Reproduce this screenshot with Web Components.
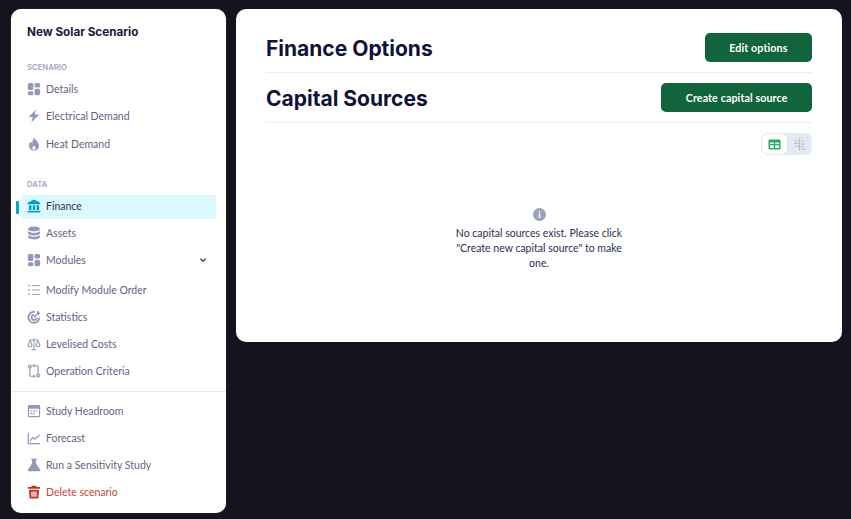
<!DOCTYPE html>
<html lang="en">
<head>
<meta charset="utf-8">
<title>Finance Options</title>
<style>
    html, body { margin: 0; height: 100%; background: #14141F; }
    body { font-family: "Lato", "Open Sans", sans-serif; overflow: hidden; }
</style>
</head>
<body>
<scenario-page>
    <scenario-sidebar slot="side"></scenario-sidebar>
    <finance-panel slot="main"></finance-panel>
</scenario-page>
<script>
const ICONS = {
    details: '<rect x="1" y="1" width="6.300" height="8" rx="1.800"/><rect x="8.700" y="1" width="6.300" height="5.300" rx="1.800"/><rect x="1" y="10.500" width="6.300" height="4.500" rx="1.800"/><rect x="8.700" y="7.700" width="6.300" height="7.300" rx="1.800"/>',
    bolt: '<path d="M10 .8 2 9.200h4.600L5 15.200l9-8.800H9L10 .8z"/>',
    flame: '<path d="M8.600 .8c.5 2.600 5.100 4.800 5.100 9.300A5.600 5.600 0 0 1 8 15.700a5.600 5.600 0 0 1-5.700-5.600c0-2.100 1-3.700 2.300-4.900.2 1.200.7 2 1.400 2.400C5.900 5.300 6.700 2.500 8.600.8zM8 9.800c-1.100 1.100-1.900 1.900-1.900 3a1.900 1.900 0 0 0 3.800 0c0-1.100-.8-1.900-1.900-3z" fill-rule="evenodd"/>',
    bank: '<path d="M8 .6.800 4.200V6h14.400V4.200L8 .6z"/><path d="M2.200 7h2.900v5.500H2.200zM6.600 7h2.800v5.500H6.600zM10.900 7h2.900v5.500h-2.900zM.8 13.300h14.400v2H.8z"/>',
    db: '<ellipse cx="8" cy="3.400" rx="6.800" ry="2.700"/><path d="M1.200 5.800c1 1.300 3.700 2.100 6.800 2.100s5.800-.8 6.800-2.100v2.500c0 1.400-3 2.600-6.800 2.600s-6.800-1.200-6.800-2.600z"/><path d="M1.200 10.300c1 1.300 3.700 2.100 6.800 2.100s5.800-.8 6.800-2.100v2.300c0 1.500-3 2.700-6.800 2.700s-6.800-1.200-6.800-2.700z"/>',
    list: '<g fill="none" stroke="currentColor" stroke-width="1.100"><path d="M5.500 3h9.500M5.500 8h9.500M5.500 13h9.500"/><path d="M1.300 3h2M1.300 8h2M1.300 13h2" stroke-width="1.700"/></g>',
    target: '<g fill="none" stroke="currentColor"><path d="M9 2.300A6.200 6.200 0 1 0 14 8.500" stroke-width="2.200"/><path d="M8.500 5.600A2.900 2.900 0 1 0 11 9" stroke-width="2"/><path d="M8 8.500 13.500 3" stroke-width="1.500"/></g><path d="M11.300 1.300 13.200.8l.2 2 2 .2-2.400 2.400-2-.2z"/>',
    scale: '<g fill="none" stroke="currentColor" stroke-width="1.200"><path d="M8 1.500v12.500M5.500 14.500h5M3 3.500h10"/><path d="M3.500 4 1.200 9.500a2.400 2.400 0 0 0 4.600 0zM12.500 4l-2.300 5.500a2.400 2.400 0 0 0 4.600 0z"/></g>',
    swap: '<g fill="none" stroke="currentColor" stroke-width="1.400"><circle cx="3.300" cy="2.800" r="1.600"/><circle cx="12.700" cy="13.200" r="1.600"/><path d="M3.300 4.500v8.500a1 1 0 0 0 1 1H9"/><path d="M12.700 11.500V3a1 1 0 0 0-1-1H7"/><path d="M8.600 .4 6.800 2l1.800 1.600M7.400 12.400 9.200 14l-1.800 1.600" stroke-width="1.200"/></g>',
    calendar: '<path fill-rule="evenodd" d="M2.500 1h11A1.500 1.500 0 0 1 15 2.500v11a1.500 1.500 0 0 1-1.500 1.500h-11A1.500 1.500 0 0 1 1 13.500v-11A1.500 1.500 0 0 1 2.500 1zM2.300 5.500v8c0 .2.100.3.3.3h10.800c.2 0 .3-.1.300-.3v-8z"/><path d="M4 7.500h2v1.300H4zM7 7.500h2v1.300H7zM10 7.500h2v1.300h-2zM4 10.300h2v1.300H4zM7 10.300h2v1.300H7z"/>',
    chart: '<g fill="none" stroke="currentColor" stroke-width="1.400"><path d="M1.500 2v12.500H15"/><path d="M3.500 11 6.500 7.500l2.500 2L14.500 4.500"/></g>',
    flask: '<path d="M4.800 .8h6.400v1.600h-1v4l4.800 7.100A1.100 1.100 0 0 1 14 15.200H2a1.100 1.100 0 0 1-1-1.700l4.800-7.100v-4h-1z"/>',
    trash: '<path fill-rule="evenodd" d="M5.500.8h5l.7 1.600H15v2H1v-2h3.800zM2.200 5.400h11.600l-.7 9.100a1.200 1.200 0 0 1-1.200 1H4.100a1.200 1.200 0 0 1-1.200-1zM5 7.500v6h1.400v-6zm2.300 0v6h1.400v-6zm2.300 0v6H11v-6z"/>'
}

const pageTemplate = document.createElement('template')
pageTemplate.innerHTML = `
    <style>
        :host {
            display: flex;
            align-items: flex-start;
            gap: 10px;
            padding: 9px 9px 0 11px;
        }
        ::slotted([slot="main"]) {
            flex: 1;
        }
    </style>
    <slot name="side"></slot>
    <slot name="main"></slot>
`

class ScenarioPage extends HTMLElement {
    constructor () {
        super()
        this.attachShadow({ mode: 'open' }).appendChild(pageTemplate.content.cloneNode(true))
    }
}

const navTemplate = document.createElement('template')
navTemplate.innerHTML = `
    <style>
        :host {
            display: flex;
            align-items: center;
            position: relative;
            height: 27px;
            margin: 0 10px;
            padding: 0 8px 0 6px;
            gap: 5px;
            font-size: 10.500px;
            color: #5F6480;
        }
        :host([active]) {
            height: 22px;
            padding-bottom: 2px;
            margin-top: 1px;
            background: #DAF8FE;
            border-radius: 3px;
            color: #2C3350;
        }
        :host([active])::before {
            content: '';
            position: absolute;
            left: -5px;
            top: 6px;
            width: 3px;
            height: 13px;
            border-radius: 1px;
            background: #00A9C6;
        }
        :host([danger]) { color: #C4473B; }
        svg {
            width: 14px;
            height: 14px;
            flex: none;
            fill: currentColor;
            color: #9298B5;
        }
        :host([active]) svg { color: #00A0BE; }
        :host([danger]) svg { color: #B8352A; }
        .label { flex: 1; white-space: nowrap; }
        .chevron { width: 8px; height: 8px; color: #3A3F57; display: none; }
        :host([expandable]) .chevron { display: block; margin-right: 1px; }
    </style>
    <svg class="icon" viewBox="0 0 16 16"></svg>
    <span class="label"><slot></slot></span>
    <svg class="chevron" viewBox="0 0 8 8"><path d="M1.300 2.600 4 5.300l2.700-2.700" fill="none" stroke="currentColor" stroke-width="1.300"/></svg>
`

class NavItem extends HTMLElement {
    constructor () {
        super()
        this.attachShadow({ mode: 'open' }).appendChild(navTemplate.content.cloneNode(true))
    }

    connectedCallback () {
        this.shadowRoot.querySelector('.icon').innerHTML = ICONS[this.getAttribute('icon')] || ''
    }
}

const sidebarTemplate = document.createElement('template')
sidebarTemplate.innerHTML = `
    <style>
        :host {
            display: block;
            width: 215px;
            height: 504px;
            box-sizing: border-box;
            padding-top: 16px;
            background: #fff;
            border-radius: 10px;
            box-shadow: 0 0 1px #8D93AD;
        }
        .title {
            margin: 0 0 0 16px;
            height: 15px;
            line-height: 15px;
            font-family: "Inter", sans-serif;
            font-size: 11.700px;
            font-weight: 700;
            color: #16193A;
        }
        .section {
            margin: 23px 0 0 16px;
            height: 11px;
            line-height: 11px;
            font-family: "Inter", sans-serif;
            font-size: 7.700px;
            font-weight: 600;
            color: #A0A5BE;
        }
        .first { margin-top: 22px; margin-bottom: 2px; }
        .data { margin-top: 22px; margin-bottom: 5px; }
        .heat { margin-top: 1px; }
        hr {
            border: 0;
            border-top: 1px solid #E4EAF2;
            margin: 7px 0 5px;
        }
        .gap { height: 3px; }
    </style>
    <h1 class="title">New Solar Scenario</h1>
    <div class="section first">SCENARIO</div>
    <nav-item icon="details">Details</nav-item>
    <nav-item icon="bolt">Electrical Demand</nav-item>
    <nav-item icon="flame" class="heat">Heat Demand</nav-item>
    <div class="section data">DATA</div>
    <nav-item icon="bank" active>Finance</nav-item>
    <nav-item icon="db">Assets</nav-item>
    <nav-item icon="details" expandable>Modules</nav-item>
    <div class="gap"></div>
    <nav-item icon="list">Modify Module Order</nav-item>
    <nav-item icon="target">Statistics</nav-item>
    <nav-item icon="scale">Levelised Costs</nav-item>
    <nav-item icon="swap">Operation Criteria</nav-item>
    <hr>
    <nav-item icon="calendar">Study Headroom</nav-item>
    <nav-item icon="chart">Forecast</nav-item>
    <nav-item icon="flask">Run a Sensitivity Study</nav-item>
    <nav-item icon="trash" danger>Delete scenario</nav-item>
`

class ScenarioSidebar extends HTMLElement {
    constructor () {
        super()
        this.attachShadow({ mode: 'open' }).appendChild(sidebarTemplate.content.cloneNode(true))
    }
}

const buttonTemplate = document.createElement('template')
buttonTemplate.innerHTML = `
    <style>
        :host {
            display: inline-flex;
            align-items: center;
            justify-content: center;
            height: 29px;
            padding: 0 24.500px;
            background: #11643C;
            border-radius: 5px;
            color: #fff;
            font-size: 10.700px;
            font-weight: 700;
            letter-spacing: 0.1px;
            white-space: nowrap;
        }
    </style>
    <slot></slot>
`

class AppButton extends HTMLElement {
    constructor () {
        super()
        this.attachShadow({ mode: 'open' }).appendChild(buttonTemplate.content.cloneNode(true))
    }
}

const headerTemplate = document.createElement('template')
headerTemplate.innerHTML = `
    <style>
        :host {
            display: flex;
            align-items: center;
            justify-content: space-between;
            height: 49px;
            border-bottom: 1px solid #E6EDFB;
        }
        h2 {
            margin: 0;
            padding-top: 1px;
            font-family: "Inter", sans-serif;
            font-size: 21px;
            font-weight: 700;
            color: #0F1338;
        }
    </style>
    <h2><slot name="title"></slot></h2>
    <slot name="action"></slot>
`

class SectionHeader extends HTMLElement {
    constructor () {
        super()
        this.attachShadow({ mode: 'open' }).appendChild(headerTemplate.content.cloneNode(true))
    }
}

const toggleTemplate = document.createElement('template')
toggleTemplate.innerHTML = `
    <style>
        :host {
            display: inline-flex;
            align-items: stretch;
            width: 51px;
            height: 22px;
            background: #E3E9F0;
            border-radius: 7px;
        }
        div {
            flex: 1;
            display: flex;
            align-items: center;
            justify-content: center;
            border-radius: 7px;
        }
        .on {
            background: #fff;
            border: 1px solid #E3E9F0;
        }
        svg { width: 13px; height: 13px; }
    </style>
    <div class="on">
        <svg viewBox="0 0 13 13"><path fill-rule="evenodd" fill="#27AE60" d="M1.500 1.500h10a1 1 0 0 1 1 1v8a1 1 0 0 1-1 1h-10a1 1 0 0 1-1-1v-8a1 1 0 0 1 1-1zM2 4.500V6h3.800V4.500zm5.200 0V6H11V4.500zM2 7.300v2.700h3.800V7.300zm5.200 0v2.700H11V7.300z"/></svg>
    </div>
    <div>
        <svg viewBox="0 0 13 13"><path fill="none" stroke="#B5BCCB" stroke-width="1.100" d="M6.500 .5v12M1 3h4M1 5.500h5M2.500 8h3.500M8 6h4M8 8.500h3M8 11h4.500M8 3h2"/></svg>
    </div>
`

class ViewToggle extends HTMLElement {
    constructor () {
        super()
        this.attachShadow({ mode: 'open' }).appendChild(toggleTemplate.content.cloneNode(true))
    }
}

const emptyTemplate = document.createElement('template')
emptyTemplate.innerHTML = `
    <style>
        :host {
            display: flex;
            flex-direction: column;
            align-items: center;
            width: 175px;
            margin: 0 auto;
            text-align: center;
            font-size: 10.500px;
            line-height: 15px;
            color: #2A3050;
        }
        svg { width: 13px; height: 13px; margin-bottom: 5px; }
    </style>
    <svg viewBox="0 0 13 13">
        <circle cx="6.500" cy="6.500" r="6.500" fill="#9CA2BC"/>
        <path d="M5.800 5.500h1.400v4.500H5.800zM5.800 3h1.400v1.400H5.800z" fill="#fff"/>
    </svg>
    <slot></slot>
`

class EmptyState extends HTMLElement {
    constructor () {
        super()
        this.attachShadow({ mode: 'open' }).appendChild(emptyTemplate.content.cloneNode(true))
    }
}

const panelTemplate = document.createElement('template')
panelTemplate.innerHTML = `
    <style>
        :host {
            display: block;
            height: 333px;
            box-sizing: border-box;
            padding: 14px 30px 0;
            background: #fff;
            border-radius: 10px;
        }
        .tools {
            display: flex;
            justify-content: flex-end;
            margin-top: 10px;
            margin-bottom: 53px;
        }
    </style>
    <section-header>
        <span slot="title">Finance Options</span>
        <app-button slot="action">Edit options</app-button>
    </section-header>
    <section-header>
        <span slot="title">Capital Sources</span>
        <app-button slot="action">Create capital source</app-button>
    </section-header>
    <div class="tools"><view-toggle></view-toggle></div>
    <empty-state>No capital sources exist. Please click "Create new capital source" to make one.</empty-state>
`

class FinancePanel extends HTMLElement {
    constructor () {
        super()
        this.attachShadow({ mode: 'open' }).appendChild(panelTemplate.content.cloneNode(true))
    }
}

customElements.define('scenario-page', ScenarioPage)
customElements.define('nav-item', NavItem)
customElements.define('scenario-sidebar', ScenarioSidebar)
customElements.define('app-button', AppButton)
customElements.define('section-header', SectionHeader)
customElements.define('view-toggle', ViewToggle)
customElements.define('empty-state', EmptyState)
customElements.define('finance-panel', FinancePanel)
</script>
</body>
</html>
